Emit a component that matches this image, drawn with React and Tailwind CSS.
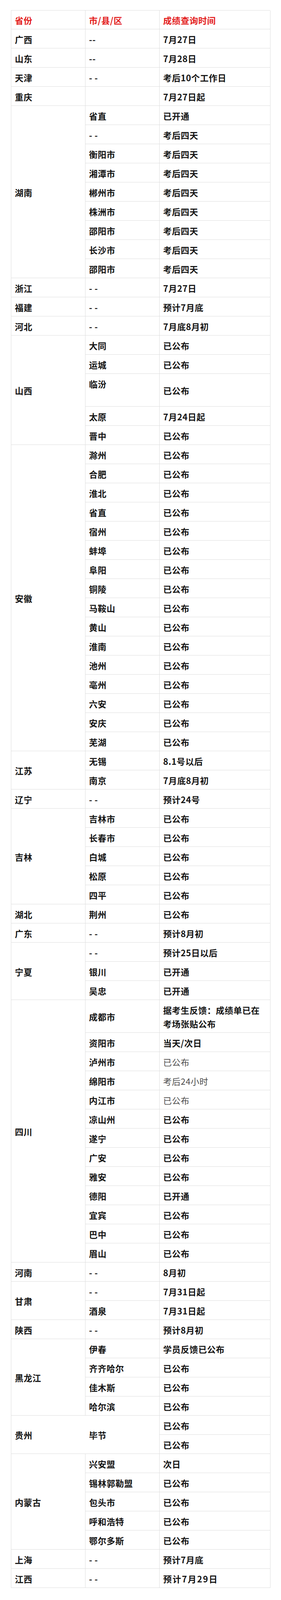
import React from "react";

const A = "已公布";
const groups = [
  { p: "广西", rows: [["--", "7月27日"]] },
  { p: "山东", rows: [["--", "7月28日"]] },
  { p: "天津", rows: [["- -", "考后10个工作日"]] },
  { p: "重庆", rows: [["", "7月27日起"]] },
  {
    p: "湖南",
    rows: [
      ["省直", "已开通"],
      ["- -", "考后四天"],
      ["衡阳市", "考后四天"],
      ["湘潭市", "考后四天"],
      ["郴州市", "考后四天"],
      ["株洲市", "考后四天"],
      ["邵阳市", "考后四天"],
      ["长沙市", "考后四天"],
      ["邵阳市", "考后四天"],
    ],
  },
  { p: "浙江", rows: [["- -", "7月27日"]] },
  { p: "福建", rows: [["- -", "预计7月底"]] },
  { p: "河北", rows: [["- -", "7月底8月初"]] },
  {
    p: "山西",
    rows: [
      ["大同", A],
      ["运城", A],
      ["临汾", A, "tall"],
      ["太原", "7月24日起"],
      ["晋中", A],
    ],
  },
  {
    p: "安徽",
    rows: ["滁州", "合肥", "淮北", "省直", "宿州", "蚌埠", "阜阳", "铜陵", "马鞍山", "黄山", "淮南", "池州", "亳州", "六安", "安庆", "芜湖"].map((c) => [c, A]),
  },
  {
    p: "江苏",
    rows: [
      ["无锡", "8.1号以后"],
      ["南京", "7月底8月初"],
    ],
  },
  { p: "辽宁", rows: [["- -", "预计24号"]] },
  { p: "吉林", rows: ["吉林市", "长春市", "白城", "松原", "四平"].map((c) => [c, A]) },
  { p: "湖北", rows: [["荆州", A]] },
  { p: "广东", rows: [["- -", "预计8月初"]] },
  {
    p: "宁夏",
    rows: [
      ["- -", "预计25日以后"],
      ["银川", "已开通"],
      ["吴忠", "已开通"],
    ],
  },
  {
    p: "四川",
    rows: [
      ["成都市", "", "two"],
      ["资阳市", "当天/次日"],
      ["泸州市", A, "light"],
      ["绵阳市", "考后24小时", "light"],
      ["内江市", A, "light"],
      ["凉山州", A],
      ["遂宁", A],
      ["广安", A],
      ["雅安", A],
      ["德阳", "已开通"],
      ["宜宾", A],
      ["巴中", A],
      ["眉山", A],
    ],
  },
  { p: "河南", rows: [["- -", "8月初"]] },
  {
    p: "甘肃",
    rows: [
      ["- -", "7月31日起"],
      ["酒泉", "7月31日起"],
    ],
  },
  { p: "陕西", rows: [["- -", "预计8月初"]] },
  {
    p: "黑龙江",
    rows: [
      ["伊春", "学员反馈已公布"],
      ["齐齐哈尔", A],
      ["佳木斯", A],
      ["哈尔滨", A],
    ],
  },
  { p: "贵州", special: true },
  {
    p: "内蒙古",
    rows: [
      ["兴安盟", "次日"],
      ["锡林郭勒盟", A],
      ["包头市", A],
      ["呼和浩特", A],
      ["鄂尔多斯", A],
    ],
  },
  { p: "上海", rows: [["- -", "预计7月底"]] },
  { p: "江西", rows: [["- -", "预计7月29日", "wide"]] },
];

const SPAN = {
  1: "row-span-1",
  2: "row-span-2",
  3: "row-span-3",
  4: "row-span-4",
  5: "row-span-5",
  9: "row-span-9",
  13: "row-span-13",
  16: "row-span-16",
};

const base = "flex items-center px-[9px] pt-[2px] leading-[35px] border-b border-[#dedede]";

export default function App() {
  const cells = [];
  groups.forEach((g, gi) => {
    if (g.special) {
      cells.push(
        <div key={`p${gi}`} className={`${base} col-start-1 row-span-2`}>
          {g.p}
        </div>
      );
      cells.push(
        <div key={`c${gi}`} className={`${base} border-r col-start-2 row-span-2`}>
          毕节
        </div>
      );
      cells.push(
        <div key={`t${gi}a`} className={`${base} border-r col-start-3 h-[49px]`}>
          {A}
        </div>
      );
      cells.push(
        <div key={`t${gi}b`} className={`${base} border-r col-start-3 h-[49px]`}>
          {A}
        </div>
      );
      return;
    }
    cells.push(
      <div key={`p${gi}`} className={`${base} border-r col-start-1 ${SPAN[g.rows.length]}`}>
        {g.p}
      </div>
    );
    g.rows.forEach((r, ri) => {
      const [c, t, flag] = r;
      const tall = flag === "tall" || flag === "two";
      cells.push(
        <div
          key={`c${gi}-${ri}`}
          className={`${base} border-r col-start-2 ${flag === "tall" ? "!items-start pt-[8px]" : ""}`}
        >
          {c}
        </div>
      );
      cells.push(
        <div
          key={`t${gi}-${ri}`}
          className={`${base} border-r col-start-3 ${tall ? "h-[84px]" : "h-[49px]"} ${
            flag === "light" ? "text-[#4d4d4d] font-normal" : ""
          } ${flag === "wide" ? "tracking-[2px]" : ""}`}
        >
          {flag === "two" ? (
            <div>
              据考生反馈：成绩单已在
              <br />
              考场张贴公布
            </div>
          ) : (
            t
          )}
        </div>
      );
    });
  });

  return (
    <div
      className="min-h-[4242px] bg-white pt-[26px] text-[22px] text-[#141414] font-semibold tracking-[0.5px]"
      style={{ fontFamily: '"Noto Sans CJK SC", "Noto Sans", sans-serif' }}
    >
      <div className="ml-[28px] grid w-[664px] grid-cols-[190px_190px_284px] border-l border-t border-[#dedede]">
        <div className={`${base} border-r h-[48px] font-bold text-[#e31c1c]`}>省份</div>
        <div className={`${base} border-r h-[48px] font-bold text-[#e31c1c]`}>市/县/区</div>
        <div className={`${base} border-r h-[48px] font-bold text-[#e31c1c]`}>成绩查询时间</div>
        {cells}
      </div>
    </div>
  );
}
